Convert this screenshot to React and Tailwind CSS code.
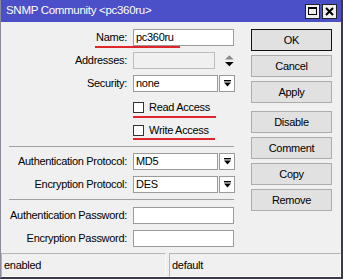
import React from "react";

function DropArrow() {
  return (
    <svg width="7" height="7" viewBox="0 0 7 7">
      <rect x="0" y="0" width="7" height="1.4" fill="#000" />
      <polygon points="0,2.6 7,2.6 3.5,6.6" fill="#000" />
    </svg>
  );
}

function Label({ children }) {
  return <div className="w-[119px] shrink-0 text-right whitespace-nowrap">{children}</div>;
}

function TextBox({ value, disabled }) {
  return (
    <div
      className={
        "h-[17px] border flex items-center px-[2px] " +
        (disabled ? "w-[85px] bg-[#f0f0f0] border-[#bdbdbd]" : "w-[101px] bg-white border-[#9b9b9b]")
      }
    >
      {value}
    </div>
  );
}

function Select({ value }) {
  return (
    <div className="flex h-[17px]">
      <div className="w-[85px] h-full bg-white border border-[#9b9b9b] flex items-center px-[2px]">{value}</div>
      <div className="w-[16px] h-full ml-[1px] bg-white border border-[#9b9b9b] flex items-center justify-center">
        <DropArrow />
      </div>
    </div>
  );
}

function Row({ label, className = "", children }) {
  return (
    <div className={"relative flex items-center gap-[6px] h-[17px] " + className}>
      <Label>{label}</Label>
      {children}
    </div>
  );
}

function Check({ label, className = "", line }) {
  return (
    <div className={"relative flex items-center h-[17px] pl-[125px] " + className}>
      <div className="w-[11px] h-[11px] bg-white border border-[#333]" />
      <span className="ml-[5px]">{label}</span>
      <div className={"absolute left-[125px] h-[2px] bg-[#e0262a] " + line} />
    </div>
  );
}

function Btn({ children, primary, className = "" }) {
  return (
    <div
      className={
        "w-[81px] h-[22px] flex items-center justify-center bg-[#e1e1e1] border " +
        (primary ? "border-[#111]" : "border-[#adadad]") +
        " " +
        className
      }
    >
      {children}
    </div>
  );
}

export default function App() {
  return (
    <div className="w-[343px] h-[279px] flex flex-col bg-[#f0f0f0] border-l border-[#8a8a9a] border-r-2 border-r-[#3a3a4a] border-b-2 border-b-[#3a3a4a] text-[11px] tracking-[-0.3px] text-black font-['Liberation_Sans',Arial,sans-serif] leading-none">
      {/* title bar */}
      <div className="h-[22px] shrink-0 bg-[#4b50c8] flex items-center pl-[5px] pr-[4px]">
        <span className="text-white text-[11.5px]">SNMP Community &lt;pc360ru&gt;</span>
        <div className="ml-auto flex gap-[2px]">
          <div className="w-[15px] h-[15px] bg-[#efefef] border border-[#222] flex items-center justify-center">
            <div className="w-[9px] h-[8px] border border-black border-t-2" />
          </div>
          <div className="w-[15px] h-[15px] bg-[#efefef] border border-[#222] flex items-center justify-center">
            <svg width="9" height="9" viewBox="0 0 9 9">
              <path d="M1 1 L8 8 M8 1 L1 8" stroke="#000" strokeWidth="2" />
            </svg>
          </div>
        </div>
      </div>

      {/* body */}
      <div className="flex flex-1 pt-[7px]">
        <div className="ml-[7px] w-[226px] flex flex-col">
          <Row label="Name:">
            <TextBox value="pc360ru" />
            <div className="absolute left-[87px] top-[17px] w-[85px] h-[2px] bg-[#e0262a]" />
          </Row>
          <Row label="Addresses:" className="mt-[6px]">
            <TextBox disabled />
            <svg width="9" height="12" viewBox="0 0 9 12" className="ml-[4px]">
              <polygon points="0,4.5 9,4.5 4.5,0" fill="#8a8a8a" />
              <polygon points="0,7 9,7 4.5,11.5" fill="#000" />
            </svg>
          </Row>
          <Row label="Security:" className="mt-[6px]">
            <Select value="none" />
          </Row>
          <Check label="Read Access" className="mt-[7px]" line="top-[17px] w-[83px]" />
          <Check label="Write Access" className="mt-[6px]" line="top-[16px] w-[82px]" />
          <div className="mt-[7px] ml-[1px] h-px bg-[#a0a0a0]" />
          <Row label="Authentication Protocol:" className="mt-[6px]">
            <Select value="MD5" />
          </Row>
          <Row label="Encryption Protocol:" className="mt-[6px]">
            <Select value="DES" />
          </Row>
          <div className="mt-[6px] ml-[1px] h-px bg-[#a0a0a0]" />
          <Row label="Authentication Password:" className="mt-[7px]">
            <TextBox />
          </Row>
          <Row label="Encryption Password:" className="mt-[6px]">
            <TextBox />
          </Row>
        </div>

        <div className="ml-[17px] flex flex-col gap-[4px]">
          <Btn primary>OK</Btn>
          <Btn>Cancel</Btn>
          <Btn>Apply</Btn>
          <Btn className="mt-[4px]">Disable</Btn>
          <Btn>Comment</Btn>
          <Btn>Copy</Btn>
          <Btn>Remove</Btn>
        </div>
      </div>

      {/* status bar */}
      <div className="h-[24px] shrink-0 flex gap-[3px] pr-[0px]">
        <div className="w-[165px] h-full flex items-center pl-[2px] border border-[#b5b5b5] border-b-[#fafafa] border-r-[#fafafa]">enabled</div>
        <div className="flex-1 h-full flex items-center pl-[2px] border border-[#b5b5b5] border-b-[#fafafa] border-r-[#fafafa]">default</div>
      </div>
    </div>
  );
}
